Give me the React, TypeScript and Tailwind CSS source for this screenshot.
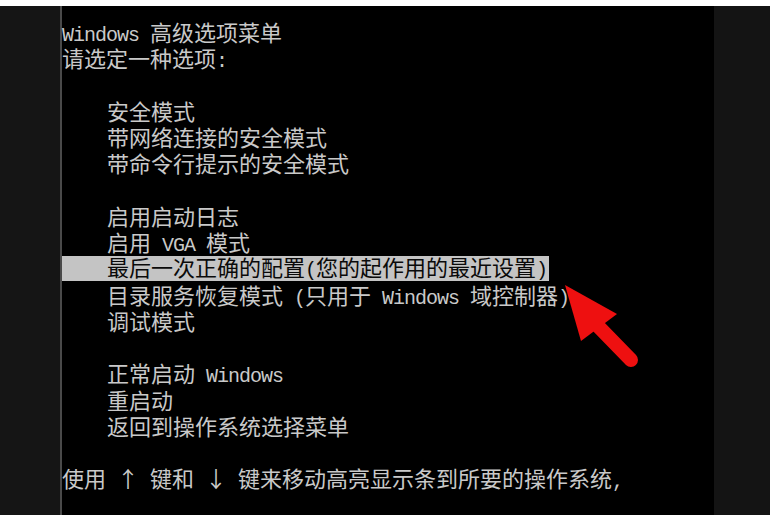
import React from "react";

type Row = { text: string; indent?: boolean; active?: boolean } | null;

const rows: Row[] = [
  { text: "Windows 高级选项菜单" },
  { text: "请选定一种选项:" },
  null,
  { text: "安全模式", indent: true },
  { text: "带网络连接的安全模式", indent: true },
  { text: "带命令行提示的安全模式", indent: true },
  null,
  { text: "启用启动日志", indent: true },
  { text: "启用 VGA 模式", indent: true },
  { text: "最后一次正确的配置(您的起作用的最近设置)", indent: true, active: true },
  { text: "目录服务恢复模式 (只用于 Windows 域控制器)", indent: true },
  { text: "调试模式", indent: true },
  null,
  { text: "正常启动 Windows", indent: true },
  { text: "重启动", indent: true },
  { text: "返回到操作系统选择菜单", indent: true },
  null,
  { text: "使用 ↑ 键和 ↓ 键来移动高亮显示条到所要的操作系统," },
];

// split a line into half-width (ascii), arrow and full-width runs
function Cells({ text }: { text: string }) {
  const parts = text.match(/[\x00-\x7f]+|[↑↓]|[^\x00-\x7f↑↓]+/g) || [];
  return (
    <>
      {parts.map((p, i) =>
        /^[\x00-\x7f]+$/.test(p) ? (
          <span key={i} className="font-['Liberation_Mono',monospace] text-[20px] tracking-[-1px]">
            {p}
          </span>
        ) : p === "↑" || p === "↓" ? (
          <span key={i} className="inline-block w-[22px] text-center">
            {p}
          </span>
        ) : (
          <span key={i}>{p}</span>
        )
      )}
    </>
  );
}

export default function App() {
  return (
    <div className="relative w-[770px] h-[515px] flex flex-col bg-white overflow-hidden">
      <div className="h-[6px] bg-white" />
      <div className="flex flex-1">
        <div className="w-[60px] bg-[#151515]" />
        <div className="w-[2px] bg-[#4a4a4a]" />
        <div className="flex-1 bg-black pt-[12px] whitespace-pre text-[22px] leading-[26.25px] text-[#c9c9c9] font-['Noto_Sans_CJK_SC',sans-serif]">
          {rows.map((r, i) =>
            r === null ? (
              <div key={i} className="h-[26.25px]" />
            ) : r.active ? (
              <div key={i} className="h-[26.25px] flex items-start">
                <span className="mt-[2px] h-[25px] bg-[#c4c4c4] text-[#0a0a0a] pl-[45px] pr-[2px] leading-[21px]">
                  <Cells text={r.text} />
                </span>
              </div>
            ) : (
              <div key={i} className={`h-[26.25px] ${r.indent ? "pl-[45px]" : ""}`}>
                <Cells text={r.text} />
              </div>
            )
          )}
        </div>
        <div className="w-[56px] bg-[#141414]" />
      </div>

      {/* red pointer over the highlighted entry */}
      <svg className="absolute left-0 top-0 pointer-events-none" width="770" height="515" viewBox="0 0 770 515">
        <line x1="596" y1="324" x2="631" y2="360" stroke="#ee1010" strokeWidth="14" strokeLinecap="round" />
        <polygon points="565,285 581,341 617,314" fill="#ee1010" />
      </svg>
    </div>
  );
}
